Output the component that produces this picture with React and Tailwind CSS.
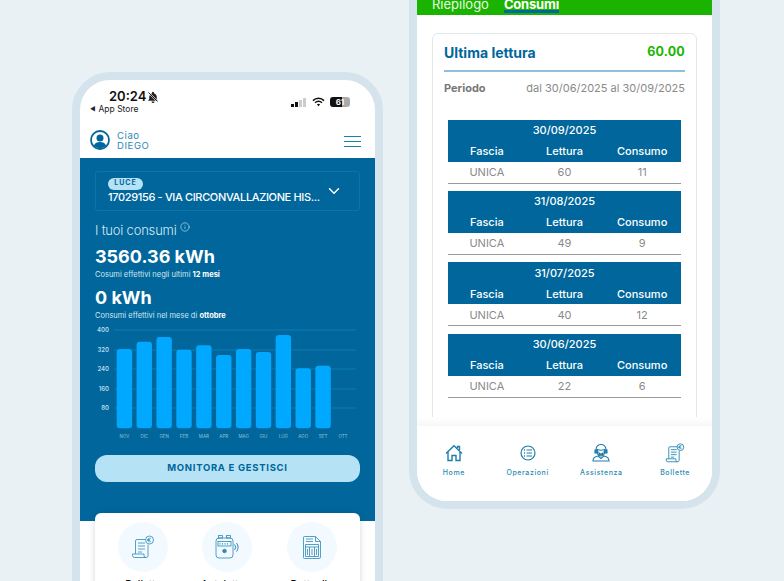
import { Fragment } from 'react';
import { ChevronDown, Info } from 'lucide-react';

const months = ['NOV', 'DIC', 'GEN', 'FEB', 'MAR', 'APR', 'MAG', 'GIU', 'LUG', 'AGO', 'SET', 'OTT'];
const tops = [349, 341.7, 337, 349.7, 345.3, 355, 349, 352, 335, 368.3, 365.7];
const grid = [['400', 330], ['320', 350], ['240', 369], ['160', 389], ['80', 408]];

const readings = [
  { date: '30/09/2025', lettura: 60, consumo: 11 },
  { date: '31/08/2025', lettura: 49, consumo: 9 },
  { date: '31/07/2025', lettura: 40, consumo: 12 },
  { date: '30/06/2025', lettura: 22, consumo: 6 },
];

// chart coordinates are the page ones minus the svg origin (95,325)
function Chart() {
  return (
    <svg width="265" height="118" viewBox="95 325 265 118" className="block mt-[4px]">
      {grid.map(([l, y]) => (
        <Fragment key={l}>
          <line x1="114" x2="356" y1={y} y2={y} stroke="#0a7dad" strokeWidth="1" />
          <text x="109" y={y + 2} textAnchor="end" fontSize="6" fontWeight="600" fill="#b9dcec">{l}</text>
        </Fragment>
      ))}
      {tops.map((t, i) => (
        <rect key={i} x={116.7 + i * 19.87} y={t} width="15.4" height={428.3 - t} rx="3" fill="#00a8ff" />
      ))}
      {months.map((m, i) => (
        <text key={m} x={124.4 + i * 19.87} y="438" textAnchor="middle" fontSize="4.5" fill="#8fc2dc">{m}</text>
      ))}
    </svg>
  );
}

function StatusBar() {
  return (
    <div className="h-[42px] flex justify-between pl-[10px] pr-[25px] pt-[9px]">
      <div>
        <div className="flex items-center pl-[19px] h-[15px] text-[13px] leading-none font-semibold text-[#111]">
          20:24
          <svg width="12" height="12" viewBox="0 0 24 24" className="ml-[1px]">
            <path d="M12 1.500a2 2 0 0 0-2 2v.8A7.500 7.500 0 0 0 4.500 11v5l-2.500 3.500h20l-2.500-3.500v-5A7.500 7.500 0 0 0 14 4.300v-.8a2 2 0 0 0-2-2zM9 20.800a3 3 0 0 0 6 0z" fill="#222" />
            <path d="M3 3l18 18" stroke="#fff" strokeWidth="3.500" />
            <path d="M3 3l18 18" stroke="#222" strokeWidth="2" />
          </svg>
        </div>
        <div className="flex items-center gap-[3px] text-[8.500px] leading-[10px] text-[#222]">
          <span className="text-[6px]">◀</span>App Store
        </div>
      </div>
      <div className="flex items-center gap-[5px] h-[14px] mt-[6px]">
        <div className="flex items-end gap-[1px] h-[9px] mr-[1px]">
          <span className="w-[3px] h-[3px] bg-[#111]" />
          <span className="w-[3px] h-[5px] bg-[#111]" />
          <span className="w-[3px] h-[7px] bg-[#ccc]" />
          <span className="w-[3px] h-[9px] bg-[#ccc]" />
        </div>
        <svg width="13" height="10" viewBox="0 0 14 10" fill="none" stroke="#111">
          <path d="M1 3.500a8.500 8.500 0 0 1 12 0" strokeWidth="1.600" />
          <path d="M3.300 5.800a5.200 5.200 0 0 1 7.400 0" strokeWidth="1.600" />
          <path d="M7 9.600L5.300 7.700a2.500 2.500 0 0 1 3.400 0z" fill="#111" stroke="none" />
        </svg>
        <div className="w-[20px] h-[10px] rounded-[3px] bg-[linear-gradient(90deg,#111_0,#111_61%,#aaa_61%)] flex items-center justify-center text-[8px] font-bold text-white leading-none">61</div>
      </div>
    </div>
  );
}

function BillIcon({ size = 24, sw = 0.8 }) {
  return (
    <svg width={size} height={size} viewBox="0 0 24 24" fill="none" stroke="#2b8ab5" strokeWidth={sw}>
      <circle cx="18.500" cy="5" r="4" />
      <path d="M19.800 3.600a1.800 1.800 0 1 0 0 2.800M16.300 4.500h2.500M16.300 5.500h2.500" />
      <path d="M14.300 4.500H6a1.500 1.500 0 0 0-1.500 1.500v13" />
      <path d="M17 9.500v11.200a1.800 1.800 0 0 1-1.800 1.800H3.500a2 2 0 0 1-2-2v-1.500h11.500v1.500a2 2 0 0 0 2 2" />
      <path d="M7 8h7M7 11h7M7 14h7M7 17h4" />
    </svg>
  );
}

function MeterIcon() {
  return (
    <svg width="24" height="24" viewBox="0 0 24 24" fill="none" stroke="#2b8ab5" strokeWidth="0.800">
      <rect x="1" y="3" width="17" height="20" rx="3" />
      <rect x="3.500" y="0.600" width="4" height="2.400" />
      <rect x="11.500" y="0.600" width="4" height="2.400" />
      <rect x="3" y="6.500" width="13" height="4.500" />
      <path d="M4.500 8.800h1M7 8.800h1M9.500 8.800h1M12 8.800h1" strokeWidth="1.200" />
      <circle cx="9.500" cy="16" r="1.800" fill="#2b8ab5" />
      <path d="M19.500 9.500a4 4 0 0 1 0 5.500M21.500 8a6.500 6.500 0 0 1 0 8.500" strokeWidth="1" />
    </svg>
  );
}

function CalcIcon() {
  return (
    <svg width="18" height="23" viewBox="0 0 18 23" fill="none" stroke="#2b8ab5" strokeWidth="0.800">
      <path d="M1.500 .5h11l5 5v15.500a1.500 1.500 0 0 1-1.500 1.500h-14.500a1 1 0 0 1-1-1v-20.500a1 1 0 0 1 1-.5z" />
      <path d="M12.500 .5v5h5M3 3h7M3 5.500h7" />
      <path d="M2.500 8.500h13v12h-13zM2.500 11h13" />
      <path d="M6.500 11v9.500M11.500 11v9.500M4.500 13v6M9 13v6M13.500 13v6" />
    </svg>
  );
}

function HomeIcon() {
  return (
    <svg width="18" height="18" viewBox="0 0 18 18" fill="none" stroke="#1f7dab" strokeWidth="1.400">
      <path d="M1 9.500L9 1.800l8 7.700" />
      <path d="M12.500 4V2.500h2v3.500" />
      <path d="M3 8v8.500h4v-5h4v5h4V8" />
    </svg>
  );
}

function OperationsIcon() {
  return (
    <svg width="16" height="16" viewBox="0 0 16 16" fill="none" stroke="#1f7dab" strokeWidth="1.200">
      <circle cx="8" cy="8" r="7" />
      <path d="M6.500 5h5.500M6.500 8h5.500M6.500 11h5.500" />
      <path d="M4 5h1M4 8h1M4 11h1" strokeWidth="1.300" />
    </svg>
  );
}

function SupportIcon() {
  return (
    <svg width="18" height="18" viewBox="0 0 18 18" fill="none" stroke="#1f7dab" strokeWidth="1.100">
      <path d="M4 7V5.500a5 5 0 0 1 10 0V7" />
      <rect x="3" y="6" width="1.800" height="3" fill="#1f7dab" />
      <rect x="13.200" y="6" width="1.800" height="3" fill="#1f7dab" />
      <path d="M5.500 5.500c2 .8 5 .8 7 0v3a3.500 3.500 0 0 1-7 0z" />
      <path d="M7 8.800c1 1.600 3 1.600 4 0v2.200H7z" fill="#1f7dab" />
      <path d="M1 17c0-3 2-4.500 5-5l3 2.500 3-2.500c3 .5 5 2 5 5z" />
    </svg>
  );
}

function Stat({ value, children }) {
  return (
    <>
      <div className="text-[18px] leading-[24px] font-bold text-white">{value}</div>
      <div className="text-[7.500px] leading-[10px] mt-[1px] text-[#cfe6f1]">{children}</div>
    </>
  );
}

function ReadingTable({ r }) {
  return (
    <div className="mb-[7.200px]">
      <div className="bg-[#00669b] text-white h-[42px] text-[11px] font-medium">
        <div className="h-[21px] flex items-center justify-center">{r.date}</div>
        <div className="h-[21px] grid grid-cols-3 text-center items-center">
          <span>Fascia</span><span>Lettura</span><span>Consumo</span>
        </div>
      </div>
      <div className="h-[22px] grid grid-cols-3 text-center items-center text-[11px] text-[#8a8a8a] border-b border-[#9a9a9a]">
        <span>UNICA</span><span>{r.lettura}</span><span>{r.consumo}</span>
      </div>
    </div>
  );
}

function NavItem({ icon, label }) {
  return (
    <div className="flex-1 flex flex-col items-center">
      <div className="h-[22px] flex items-center justify-center">{icon}</div>
      <div className="mt-[4px] text-[7px] leading-[10px] font-medium tracking-[0.600px] text-[#2b8ab5]">{label}</div>
    </div>
  );
}

export default function App() {
  return (
    <div className="w-[784px] h-[581px] overflow-hidden bg-[#e9f1f5] flex items-start pl-[72px] font-['Inter',sans-serif]">
      {/* left phone */}
      <div className="w-[311px] h-[560px] mt-[72px] shrink-0 bg-white border-[8px] border-[#d5e3ec] rounded-t-[38px] overflow-hidden">
        <StatusBar />
        <div className="h-[36px] flex items-center justify-between pl-[10px] pr-[14px]">
          <div className="flex items-center gap-[7px]">
            <svg width="20" height="20" viewBox="0 0 20 20">
              <circle cx="10" cy="10" r="9" fill="none" stroke="#00669b" strokeWidth="1.800" />
              <circle cx="10" cy="8" r="3.500" fill="#00669b" />
              <path d="M3.800 15.800c1-2.800 3.500-3.800 6.200-3.800s5.200 1 6.200 3.800a9 9 0 0 1-12.400 0z" fill="#00669b" />
            </svg>
            <div className="text-[9.500px] leading-[10px] mt-[2px] text-[#2b8ab5] tracking-[0.600px]">
              <div>Ciao</div>
              <div>DIEGO</div>
            </div>
          </div>
          <div className="w-[17px] flex flex-col gap-[3.500px] mt-[3px]">
            <span className="h-[1.500px] bg-[#1f7dab]" />
            <span className="h-[1.500px] bg-[#1f7dab]" />
            <span className="h-[1.500px] bg-[#1f7dab]" />
          </div>
        </div>

        <div className="bg-[#00669b] h-[363px] px-[15px] pt-[13px]">
          <div className="h-[40px] border border-[#0a76a6] rounded-[3px] pl-[12px] pr-[16px] flex items-center justify-between">
            <div className="min-w-0 -mt-[1px]">
              <div className="w-[35px] h-[12px] rounded-full bg-[#b5e3f5] text-[#00669b] text-[7px] font-bold tracking-[1px] flex items-center justify-center">LUCE</div>
              <div className="text-[11px] leading-[14px] font-medium tracking-[-0.350px] text-white whitespace-nowrap">17029156 - VIA CIRCONVALLAZIONE HIS...</div>
            </div>
            <ChevronDown className="w-[18px] h-[18px] shrink-0 text-white" strokeWidth={2} />
          </div>

          <div className="flex items-start gap-[3px] mt-[10px] h-[18px] text-[13px] leading-[18px] font-light tracking-[-0.200px] text-[#d5e9f3]">
            I tuoi consumi
            <Info className="w-[10px] h-[10px] mt-[1px]" strokeWidth={1.500} />
          </div>
          <div className="mt-[6px]">
            <Stat value="3560.36 kWh">Cosumi effettivi negli ultimi <b className="text-white">12 mesi</b></Stat>
          </div>
          <div className="mt-[6px]">
            <Stat value="0 kWh">Consumi effettivi nel mese di <b className="text-white">ottobre</b></Stat>
          </div>
          <Chart />
          <div className="mt-[12px] h-[27px] rounded-[12px] bg-[#b5e3f5] text-[#00669b] text-[9.500px] font-bold tracking-[0.700px] flex items-center justify-center">MONITORA E GESTISCI</div>
        </div>

        <div className="mx-[15px] -mt-[8px] relative bg-white rounded-[6px] shadow-[0_0_6px_rgba(0,60,100,0.18)] h-[120px] grid grid-cols-3 px-[6px] pt-[9px]">
          {[
            [<BillIcon key="b" />, 'Bollette'],
            [<MeterIcon key="m" />, 'Autolettura'],
            [<CalcIcon key="c" />, 'Dettaglio'],
          ].map(([icon, label]) => (
            <div key={label} className="flex flex-col items-center">
              <div className="w-[50px] h-[50px] rounded-full bg-[#f3faff] flex items-center justify-center">{icon}</div>
              <div className="mt-[5px] text-[10px] font-medium text-[#111]">{label}</div>
            </div>
          ))}
        </div>
      </div>

      {/* right phone */}
      <div className="w-[311px] h-[509px] ml-[26px] shrink-0 bg-white border-[8px] border-t-0 border-[#d5e3ec] rounded-b-[38px] overflow-hidden flex flex-col">
        <div className="h-[15px] shrink-0 bg-[#1ab400] flex items-start gap-[15px] pl-[15px] text-[13px] leading-[8px] text-[#e8f8e4]">
          <span>Riepilogo</span>
          <span className="font-bold text-white h-[10px] tracking-[-0.200px] border-b-[3px] border-[#00669b] box-content">Consumi</span>
        </div>
        <div className="flex-1 px-[15px] pt-[18px] overflow-hidden">
          <div className="h-[420px] border border-[#e3e7ea] rounded-[6px] px-[11px] pt-[10px]">
            <div className="flex items-center justify-between h-[17px]">
              <span className="text-[14px] font-bold text-[#00669b]">Ultima lettura</span>
              <span className="text-[12.500px] font-bold text-[#1ab400] tracking-[0.200px]">60.00</span>
            </div>
            <div className="h-[2px] bg-[#8fbfdc] mt-[9px]" />
            <div className="flex items-center justify-between mt-[9px] h-[14px] text-[11px] text-[#8a8a8a]">
              <span className="font-bold text-[#777]">Periodo</span>
              <span>dal 30/06/2025 al 30/09/2025</span>
            </div>
            <div className="mx-[4px] mt-[25px]">
              {readings.map(r => <ReadingTable key={r.date} r={r} />)}
            </div>
          </div>
        </div>
        <div className="h-[75px] shrink-0 bg-white relative flex pt-[16px]">
          <div className="absolute left-0 right-0 -top-[9px] h-[9px] bg-[linear-gradient(#ffffff,#f7f7f7)]" />
          <NavItem icon={<HomeIcon />} label="Home" />
          <NavItem icon={<OperationsIcon />} label="Operazioni" />
          <NavItem icon={<SupportIcon />} label="Assistenza" />
          <NavItem icon={<BillIcon size={20} sw={1.100} />} label="Bollette" />
        </div>
      </div>
    </div>
  );
}
